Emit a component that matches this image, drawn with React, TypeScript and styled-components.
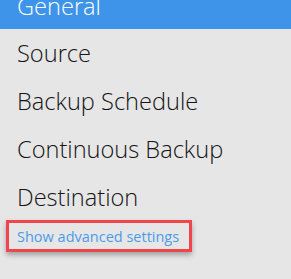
import { createGlobalStyle, styled } from 'styled-components';

const GlobalStyle = createGlobalStyle`
  html, body {
    margin: 0;
    padding: 0;
    background: #e6e6e6;
  }
  body {
    font-family: "Open Sans", "Noto Sans", sans-serif;
  }
`;

const items = ['General', 'Source', 'Backup Schedule', 'Continuous Backup', 'Destination'];

export default function App() {
  return (
    <>
      <GlobalStyle />
      <Panel>
        <Menu>
          {items.map((label, i) => (
            <Item key={label} $active={i === 0}>
              {label}
            </Item>
          ))}
        </Menu>
        <Advanced>
          <AdvancedLink href="#">Show advanced settings</AdvancedLink>
        </Advanced>
      </Panel>
    </>
  );
}

const Panel = styled.div`
  width: 291px;
  height: 279px;
  overflow: hidden;
  background: #e6e6e6;
`;

const Menu = styled.ul`
  list-style: none;
  margin: -18px 0 0;
  padding: 0;
`;

const Item = styled.li<{ $active?: boolean }>`
  height: 48px;
  display: flex;
  align-items: center;
  padding-left: 17px;
  font-size: 23.6px;
  font-weight: 300;
  color: ${(p) => (p.$active ? '#fff' : '#141414')};
  background: ${(p) => (p.$active ? '#3d94e9' : 'transparent')};
  &:first-child {
    height: 47px;
  }
`;

const Advanced = styled.div`
  margin: -1px 0 0 6px;
  width: 172px;
  height: 26px;
  border: 3px solid #f0454b;
  box-shadow: 0 3px 5px rgba(0, 0, 0, 0.3);
  display: flex;
  align-items: center;
  padding-left: 8px;
`;

const AdvancedLink = styled.a`
  font-size: 14.5px;
  color: #4b9bea;
  text-decoration: none;
`;
